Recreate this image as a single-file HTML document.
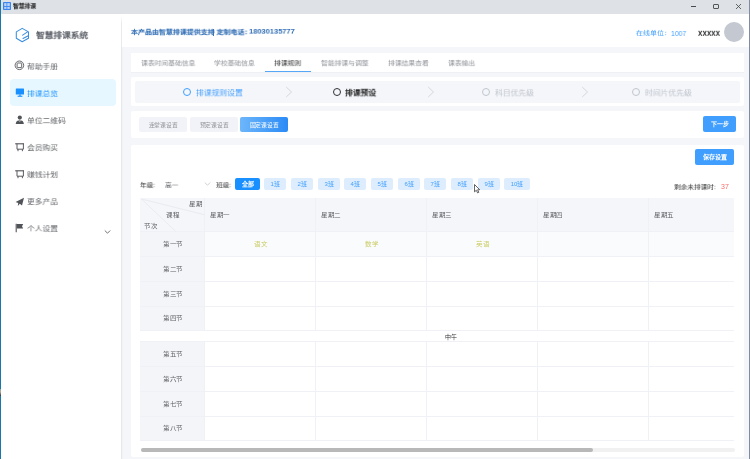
<!DOCTYPE html>
<html lang="zh-CN"><head><meta charset="utf-8">
<style>
*{margin:0;padding:0;box-sizing:border-box}
html,body{width:750px;height:459px;overflow:hidden;background:#f4f6fa;font-family:"Liberation Sans",sans-serif}
body>*{will-change:transform}
.a{position:absolute}
.t{position:absolute;white-space:nowrap;line-height:1}
#titlebar{left:0;top:0;width:750px;height:14px;background:#dee1e6}
#lb{left:0;top:0;width:1px;height:459px;background:#1a78a8}
#rb{left:749px;top:0;width:1px;height:459px;background:#7f8ca2}
#side{left:1px;top:14px;width:120px;height:445px;background:#fff;box-shadow:1px 0 1px rgba(0,0,0,0.06)}
#header{left:121px;top:14px;width:628px;height:33px;background:#fff}
.card{position:absolute;background:#fff;border-radius:2px}
.menu{color:#606266;font-size:8px;transform:scale(0.97,0.86);transform-origin:0 0;margin-top:0.6px}
.tab{color:#909399;font-size:7px;top:59.6px;transform:scale(0.97,0.88);transform-origin:0 0}
.btn{position:absolute;border-radius:2px;font-size:6px;text-align:center;line-height:15px;height:15px}
.cls{position:absolute;top:178px;height:12.3px;width:22.4px;background:#ddedfd;color:#409eff;border-radius:2px;font-size:6px;line-height:13px;text-align:center}
.vl{position:absolute;width:1px;background:#f0f1f6}
.hl{position:absolute;height:1px;background:#f0f1f6}
.cell{color:#606266;font-size:7px;transform:scale(0.93,0.86);transform-origin:0 0}
</style></head><body>
<div id="titlebar" class="a"></div>
<!-- app icon -->
<svg class="a" style="left:3px;top:2px" width="8" height="8" viewBox="0 0 8 8"><rect width="8" height="8" rx="0.8" fill="#3a86ee"/><rect x="1.2" y="1.1" width="2.3" height="2.9" fill="#b9d4fa"/><rect x="4.3" y="1.1" width="2.5" height="2.9" fill="#b9d4fa"/><rect x="1.2" y="4.9" width="2.3" height="2" fill="#b9d4fa"/><rect x="4.3" y="4.9" width="2.5" height="2" fill="#b9d4fa"/></svg>
<div class="t" style="left:13px;top:3.2px;font-size:6px;color:#1e1e1e;font-weight:bold;transform:scale(0.96);transform-origin:0 0">智慧排课</div>
<!-- window controls -->
<div class="a" style="left:691px;top:6px;width:5px;height:1px;background:#4a4a4a"></div>
<div class="a" style="left:713px;top:3.8px;width:5.6px;height:5.2px;border:0.9px solid #555;border-radius:1px"></div>
<svg class="a" style="left:735px;top:3px" width="7" height="7" viewBox="0 0 7 7"><path d="M1 1L6 6M6 1L1 6" stroke="#444" stroke-width="0.8"/></svg>

<div id="side" class="a"></div>
<div id="lb" class="a"></div>
<div id="rb" class="a"></div>
<div class="a" style="left:0;top:389px;width:1px;height:7px;background:linear-gradient(#8fa0a0,#b5b0a0 40%,#2a3a40)"></div>

<!-- logo -->
<svg class="a" style="left:15px;top:27px" width="15" height="16" viewBox="0 0 15 16">
<path d="M7.2 1.4 L13.5 4.9 L13.5 11.2 L7.2 14.7 L1.3 11.2 L1.3 4.9 Z" fill="none" stroke="#3b8de0" stroke-width="1.05" stroke-linejoin="round"/>
<path d="M12.6 4.9 L7.6 8.1 M13.3 8.7 L8 11.5" stroke="#3b8de0" stroke-width="1.05" stroke-linecap="round" fill="none"/>
</svg>
<div class="t" style="left:36px;top:32px;font-size:9px;transform:scale(0.965,0.87);transform-origin:0 0;color:#5a5e66;font-weight:bold">智慧排课系统</div>

<!-- menu -->
<div class="a" style="left:10px;top:79px;width:106.2px;height:27px;background:#e6f7ff;border-radius:4px"></div>
<svg class="a" style="left:14px;top:60px" width="11" height="11" viewBox="0 0 11 11"><circle cx="5.4" cy="5.3" r="4.3" fill="none" stroke="#606266" stroke-width="0.95"/><rect x="3.1" y="3" width="4.6" height="4.6" rx="0.5" fill="none" stroke="#606266" stroke-width="0.95"/></svg>
<div class="t menu" style="left:27px;top:63.2px">帮助手册</div>
<svg class="a" style="left:15px;top:88px" width="10" height="10" viewBox="0 0 10 10"><rect x="0.8" y="0.6" width="8.2" height="6" rx="0.3" fill="#1890ff"/><rect x="4.2" y="6.4" width="1.6" height="1.4" fill="#1890ff"/><rect x="2.6" y="7.7" width="4.8" height="1.1" fill="#1890ff"/></svg>
<div class="t menu" style="left:27px;top:90.1px;color:#1890ff">排课总览</div>
<svg class="a" style="left:15px;top:115px" width="10" height="10" viewBox="0 0 10 10"><circle cx="4.8" cy="2.6" r="2.1" fill="#505357"/><path d="M0.7 9 C1 6.3 2.5 5.3 4.8 5.3 C7.1 5.3 8.6 6.3 8.9 9 Z" fill="#505357"/><path d="M3.9 5.4 L4.8 6.6 L5.7 5.4" fill="none" stroke="#fff" stroke-width="0.5"/></svg>
<div class="t menu" style="left:27px;top:117.7px">单位二维码</div>
<svg class="a" style="left:15px;top:142.6px" width="10" height="10" viewBox="0 0 10 10"><path d="M0.2 0.8 H9" stroke="#505357" stroke-width="1.1"/><path d="M2 0.8 V6.2 H8.4 V0.8" fill="none" stroke="#505357" stroke-width="0.95"/><path d="M3 6.2 V8.2 M7.4 6.2 V8.2" stroke="#505357" stroke-width="0.95"/></svg>
<div class="t menu" style="left:27px;top:144.4px">会员购买</div>
<svg class="a" style="left:15px;top:169.6px" width="10" height="10" viewBox="0 0 10 10"><path d="M0.2 0.8 H9" stroke="#505357" stroke-width="1.1"/><path d="M2 0.8 V6.2 H8.4 V0.8" fill="none" stroke="#505357" stroke-width="0.95"/><path d="M3 6.2 V8.2 M7.4 6.2 V8.2" stroke="#505357" stroke-width="0.95"/></svg>
<div class="t menu" style="left:27px;top:171.2px">赚钱计划</div>
<svg class="a" style="left:15px;top:197px" width="10" height="10" viewBox="0 0 10 10"><path d="M9 0.8 L0.6 5 L3.2 6 L2.8 9 L4.8 6.8 L7 8.4 Z" fill="#505357"/></svg>
<div class="t menu" style="left:27px;top:198.8px">更多产品</div>
<svg class="a" style="left:15.3px;top:223.3px" width="10" height="10" viewBox="0 0 10 10"><path d="M1.2 0.8 V9.2" stroke="#505357" stroke-width="1.1"/><path d="M1.8 1 H8.2 L7 3.2 L8.2 5.4 H1.8 Z" fill="#505357"/></svg>
<div class="t menu" style="left:27px;top:225.8px">个人设置</div>
<svg class="a" style="left:104px;top:229px" width="7" height="6" viewBox="0 0 7 6"><path d="M0.8 1.5 L3.5 4.2 L6.2 1.5" fill="none" stroke="#606266" stroke-width="0.9"/></svg>

<!-- header -->
<div id="header" class="a"></div>
<div class="a" style="left:121px;top:16px;width:1.2px;height:31px;background:linear-gradient(rgba(230,232,238,0),#e8eaf0 25%)"></div>
<div class="t" style="left:131px;top:29px;font-size:7px;color:#2f6db4;font-weight:bold;transform:scale(0.995,0.85);transform-origin:0 0">本产品由智慧排课提供支持<span style="display:inline-block;width:1.95px"></span>定制电话：</div>
<div class="a" style="left:212.9px;top:29px;width:0.9px;height:7px;background:#3a74b8"></div>
<div class="t" style="left:249px;top:28.1px;font-size:8px;color:#2f6db4;font-weight:bold;transform:scale(0.935);transform-origin:0 0">18030135777</div>
<div class="t" style="left:636px;top:29.8px;font-size:7px;color:#409eff;transform:scale(1,0.86);transform-origin:0 0">在线单位：</div>
<div class="t" style="left:670.6px;top:29.5px;font-size:7px;color:#409eff;transform:scale(0.97,1.06);transform-origin:0 0">1007</div>
<div class="t" style="left:698px;top:28.6px;font-size:8px;color:#303133;font-weight:bold;transform:scale(0.99,1.2);transform-origin:0 0">xxxxx</div>
<div class="a" style="left:724px;top:22.4px;width:19.8px;height:19.8px;border-radius:50%;background:#c3c8d1"></div>

<!-- tabs card -->
<div class="card" style="left:131px;top:53px;width:613px;height:20px;border-radius:0;border-bottom:1px solid #eef0f4"></div>
<div class="t tab" style="left:140.5px">课表时间基础信息</div>
<div class="t tab" style="left:213.5px">学校基础信息</div>
<div class="t tab" style="left:274px;color:#303133">排课规则</div>
<div class="a" style="left:265px;top:71.1px;width:46px;height:1.3px;background:#58a6f6"></div>
<div class="t tab" style="left:321px">智能排课与调整</div>
<div class="t tab" style="left:388px">排课结果查看</div>
<div class="t tab" style="left:448px">课表输出</div>

<!-- steps card -->
<div class="card" style="left:131px;top:77px;width:613px;height:29px"></div>
<div class="a" style="left:135px;top:81px;width:605px;height:22px;background:#f4f6fa;border-radius:2px"></div>
<div class="a" style="left:183px;top:87.8px;width:8px;height:8px;border:1.3px solid #409eff;border-radius:50%"></div>
<div class="t" style="left:195.5px;top:89.6px;font-size:8px;color:#409eff;transform:scale(0.975,0.9);transform-origin:0 0">排课规则设置</div>
<svg class="a" style="left:285px;top:86px" width="8" height="12" viewBox="0 0 8 12"><path d="M1.2 1 L6.5 6 L1.2 11" fill="none" stroke="#cbced4" stroke-width="0.8"/></svg>
<div class="a" style="left:333px;top:87.8px;width:8px;height:8px;border:1.5px solid #303133;border-radius:50%"></div>
<div class="t" style="left:345.3px;top:89.6px;font-size:8px;color:#2a2a2a;font-weight:bold;transform:scale(0.975,0.9);transform-origin:0 0">排课预设</div>
<svg class="a" style="left:427px;top:86px" width="8" height="12" viewBox="0 0 8 12"><path d="M1.2 1 L6.5 6 L1.2 11" fill="none" stroke="#cbced4" stroke-width="0.8"/></svg>
<div class="a" style="left:482px;top:87.8px;width:8px;height:8px;border:1.2px solid #c0c4cc;border-radius:50%"></div>
<div class="t" style="left:495px;top:89.6px;font-size:8px;color:#c0c4cc;transform:scale(0.975,0.9);transform-origin:0 0">科目优先级</div>
<svg class="a" style="left:580.5px;top:86px" width="8" height="12" viewBox="0 0 8 12"><path d="M1.2 1 L6.5 6 L1.2 11" fill="none" stroke="#cbced4" stroke-width="0.8"/></svg>
<div class="a" style="left:632px;top:87.8px;width:8px;height:8px;border:1.2px solid #c0c4cc;border-radius:50%"></div>
<div class="t" style="left:645px;top:89.6px;font-size:8px;color:#c0c4cc;transform:scale(0.975,0.9);transform-origin:0 0">时间片优先级</div>

<!-- buttons card -->
<div class="card" style="left:131px;top:111px;width:613px;height:27px"></div>
<div class="btn" style="left:138.8px;top:117.1px;width:48px;height:15.4px;line-height:16.2px;background:#f2f3f8;color:#909399"><span style="display:inline-block;transform:scale(0.96)">连堂课设置</span></div>
<div class="btn" style="left:189.5px;top:117.1px;width:48px;height:15.4px;line-height:16.2px;background:#f2f3f8;color:#909399"><span style="display:inline-block;transform:scale(0.96)">预定课设置</span></div>
<div class="btn" style="left:240px;top:117.1px;width:48.2px;height:15.4px;line-height:16.2px;background:linear-gradient(90deg,#6db6fb,#2a8bf6);color:#fff"><span style="display:inline-block;transform:scale(0.96)">固定课设置</span></div>
<div class="btn" style="left:703px;top:116px;width:33px;height:16px;line-height:16px;background:#409eff;color:#fff;font-weight:bold">下一步</div>

<!-- main card -->
<div class="card" style="left:131px;top:145.4px;width:613px;height:311.6px"></div>
<div class="btn" style="left:695px;top:149px;width:39px;height:15.5px;line-height:17px;padding-left:0.2px;background:#409eff;color:#fff;font-weight:bold">保存设置</div>
<div class="t" style="left:140px;top:181.8px;font-size:7px;color:#303133;transform:scale(0.95,0.86);transform-origin:0 0">年级:</div>
<div class="t" style="left:165px;top:181.8px;font-size:7px;color:#606266;transform:scale(0.95,0.86);transform-origin:0 0">高一</div>
<svg class="a" style="left:204px;top:181px" width="7" height="6" viewBox="0 0 7 6"><path d="M0.8 1.5 L3.5 4.2 L6.2 1.5" fill="none" stroke="#c0c4cc" stroke-width="0.8"/></svg>
<div class="t" style="left:216px;top:181.8px;font-size:7px;color:#303133;transform:scale(0.95,0.86);transform-origin:0 0">班级:</div>
<div class="cls" style="left:235px;width:25.4px;background:#1890ff;color:#fff;font-weight:bold">全部</div>
<div class="cls" style="left:264.3px">1班</div>
<div class="cls" style="left:291px">2班</div>
<div class="cls" style="left:317.6px">3班</div>
<div class="cls" style="left:344.3px">4班</div>
<div class="cls" style="left:371px">5班</div>
<div class="cls" style="left:397.6px">6班</div>
<div class="cls" style="left:424.3px">7班</div>
<div class="cls" style="left:451px">8班</div>
<div class="cls" style="left:477.7px">9班</div>
<div class="cls" style="left:504.3px;width:26px">10班</div>
<div class="t" style="left:674.4px;top:184px;font-size:7px;color:#303133;transform:scale(0.95,0.86);transform-origin:0 0">剩余未排课时:</div>
<div class="t" style="left:721px;top:183px;font-size:7px;color:#f56c6c">37</div>

<!-- table -->
<div id="table" class="a" style="left:140px;top:198px;width:594px;height:243px;overflow:hidden;background:#fff">
  <div class="a" style="left:0;top:0;width:594px;height:33.5px;background:#f5f6fa"></div>
  <div class="a" style="left:0;top:33.5px;width:64.5px;height:99px;background:#f4f5f8"></div>
  <div class="a" style="left:0;top:143.5px;width:64.5px;height:99px;background:#f4f5f8"></div>
  <div class="a" style="left:64.5px;top:33.5px;width:530px;height:24.8px;background:#fafbfd"></div>
  <div class="hl" style="left:0;top:32.9px;width:594px"></div>
  <div class="hl" style="left:0;top:57.7px;width:594px"></div>
  <div class="hl" style="left:0;top:82.6px;width:594px"></div>
  <div class="hl" style="left:0;top:107.5px;width:594px"></div>
  <div class="hl" style="left:0;top:131.7px;width:594px"></div>
  <div class="hl" style="left:0;top:143.0px;width:594px"></div>
  <div class="hl" style="left:0;top:167.8px;width:594px"></div>
  <div class="hl" style="left:0;top:192.7px;width:594px"></div>
  <div class="hl" style="left:0;top:217.5px;width:594px"></div>
  <div class="hl" style="left:0;top:241.7px;width:594px"></div>
  <div class="vl" style="left:64.2px;top:0px;height:132.2px"></div>
  <div class="vl" style="left:64.2px;top:143.5px;height:98.7px"></div>
  <div class="vl" style="left:174.8px;top:0px;height:132.2px"></div>
  <div class="vl" style="left:174.8px;top:143.5px;height:98.7px"></div>
  <div class="vl" style="left:285.9px;top:0px;height:132.2px"></div>
  <div class="vl" style="left:285.9px;top:143.5px;height:98.7px"></div>
  <div class="vl" style="left:397.0px;top:0px;height:132.2px"></div>
  <div class="vl" style="left:397.0px;top:143.5px;height:98.7px"></div>
  <div class="vl" style="left:508.1px;top:0px;height:132.2px"></div>
  <div class="vl" style="left:508.1px;top:143.5px;height:98.7px"></div>
  <div class="t cell" style="left:70.3px;top:13.8px">星期一</div>
  <div class="t cell" style="left:180.9px;top:13.8px">星期二</div>
  <div class="t cell" style="left:292.0px;top:13.8px">星期三</div>
  <div class="t cell" style="left:403.1px;top:13.8px">星期四</div>
  <div class="t cell" style="left:514.2px;top:13.8px">星期五</div>
  <div class="t cell" style="left:22.5px;top:43.1px">第一节</div>
  <div class="t cell" style="left:22.5px;top:68.0px">第二节</div>
  <div class="t cell" style="left:22.5px;top:92.8px">第三节</div>
  <div class="t cell" style="left:22.5px;top:117.4px">第四节</div>
  <div class="t cell" style="left:22.5px;top:153.2px">第五节</div>
  <div class="t cell" style="left:22.5px;top:178.0px">第六节</div>
  <div class="t cell" style="left:22.5px;top:202.9px">第七节</div>
  <div class="t cell" style="left:22.5px;top:227.4px">第八节</div>
  <div class="t cell" style="left:113.8px;top:43.3px;color:#c9cd62;transform:scale(0.93,0.85)">语文</div>
  <div class="t cell" style="left:224.7px;top:43.3px;color:#c9cd62;transform:scale(0.93,0.85)">数学</div>
  <div class="t cell" style="left:335.8px;top:43.3px;color:#c9cd62;transform:scale(0.93,0.85)">英语</div>
  <div class="t" style="left:305px;top:135.5px;font-size:6px;color:#303133">中午</div>
  <svg class="a" style="left:0;top:0" width="65" height="34" viewBox="0 0 65 34"><path d="M1.5 1 L64.7 16.8 M1.5 1 L35.7 33.4" stroke="#e6e8ee" stroke-width="0.8" fill="none"/></svg>
  <div class="t cell" style="left:48.5px;top:3.2px">星期</div>
  <div class="t cell" style="left:26.2px;top:14.2px">课程</div>
  <div class="t cell" style="left:3.9px;top:25.4px">节次</div>
</div>
<div class="a" style="left:140.5px;top:448.3px;width:593.5px;height:3.6px;background:#f1f1f1;border-radius:2px"></div>
<div class="a" style="left:140.5px;top:448.3px;width:451.5px;height:3.6px;background:#b8b8b8;border-radius:2px"></div>
<svg class="a" style="left:474px;top:183.6px" width="8" height="10" viewBox="0 0 8 10"><path d="M0.5 0.5 L0.5 7.8 L2.3 6.3 L3.6 8.9 L4.8 8.3 L3.6 5.8 L5.7 5.7 Z" fill="#fff" stroke="#333" stroke-width="0.75" stroke-linejoin="round"/></svg>
</body></html>
